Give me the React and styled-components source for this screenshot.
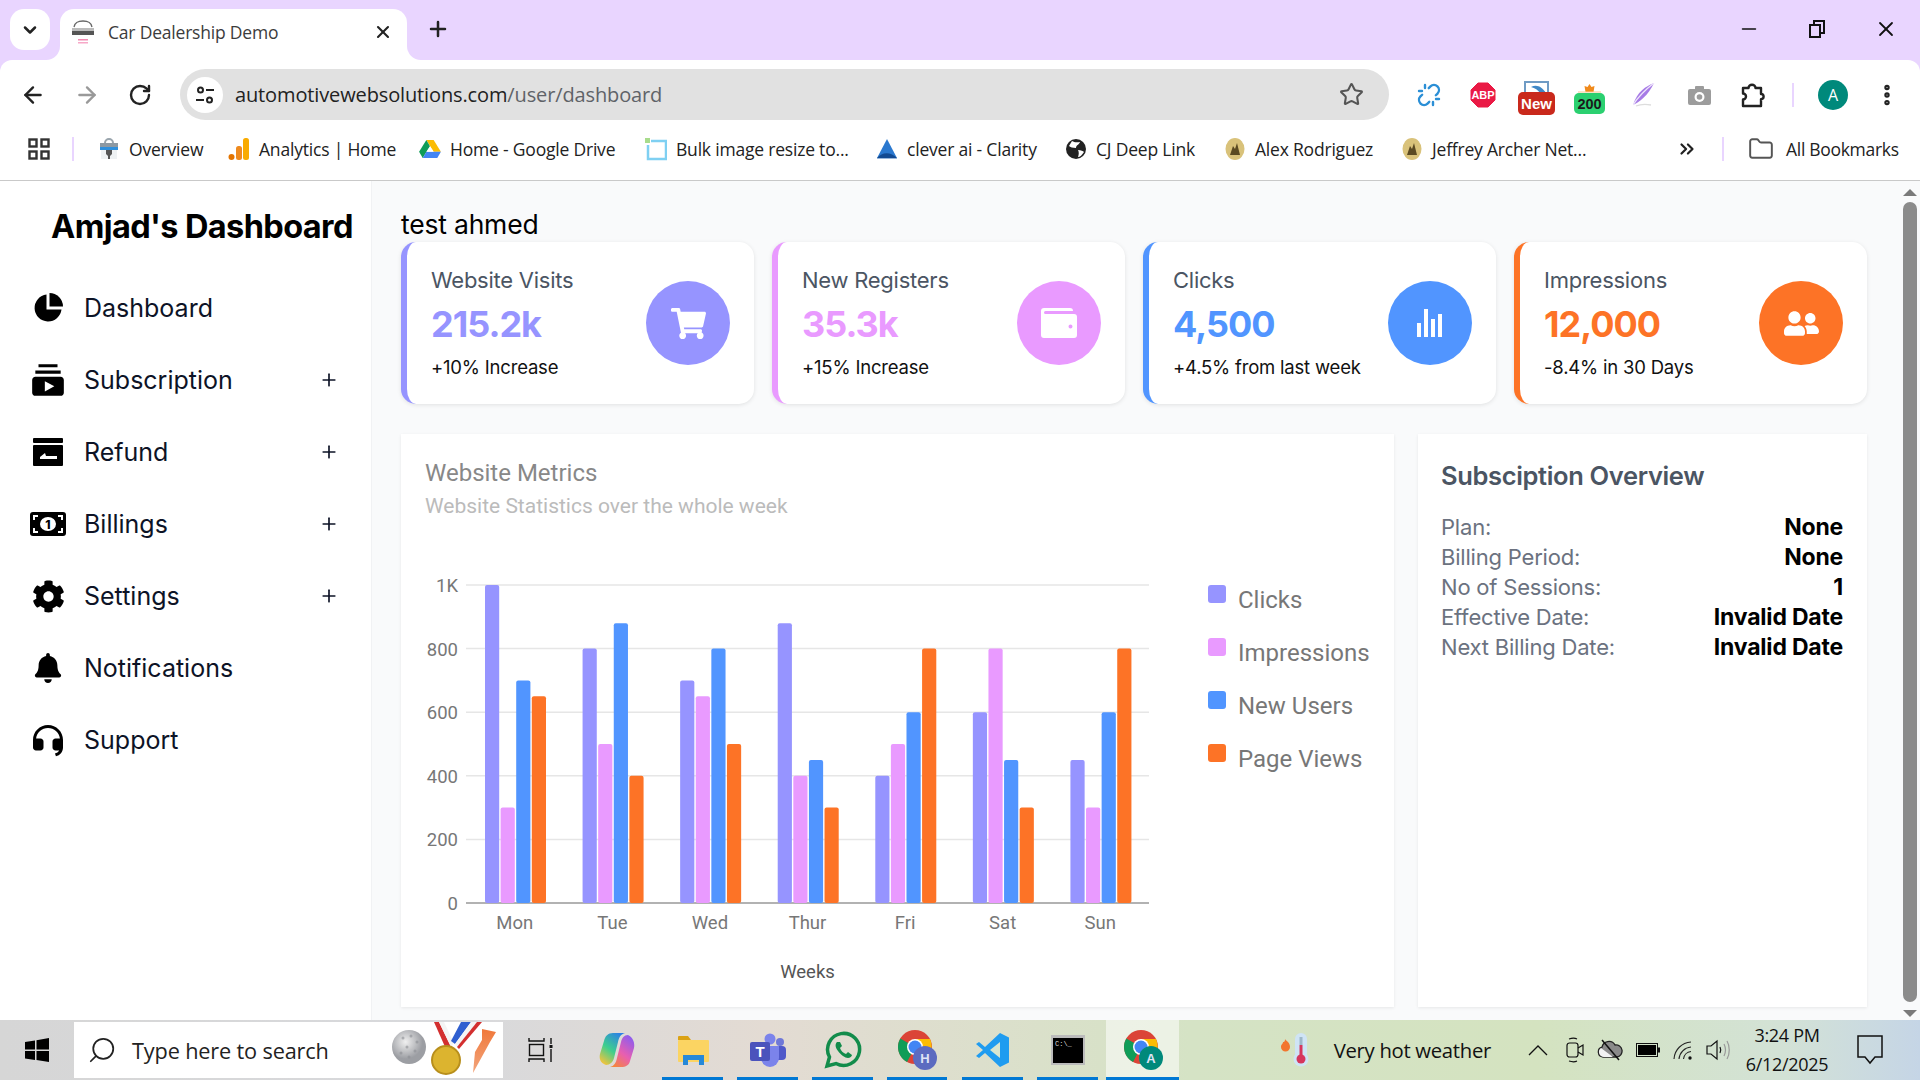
import React from "react";
import styled, { createGlobalStyle } from "styled-components";
import { FaBell, FaCog, FaShoppingCart, FaUserFriends } from "react-icons/fa";
import { MdSubscriptions } from "react-icons/md";
import { RiCustomerServiceFill } from "react-icons/ri";
import { ArrowLeft, ArrowRight, RotateCw, Star, X, Plus, ChevronDown, Minus, Search, ChevronsRight, Folder, MoreVertical, Unlink } from "lucide-react";

const SANS = `"Inter", "Noto Sans", sans-serif`;
const UI = `"Open Sans", "Noto Sans", sans-serif`;
const PURPLE = "#9694ff";
const PINK = "#e99aff";
const BLUE = "#5195ff";
const ORANGE = "#fd7326";

const GlobalStyle = createGlobalStyle`
  html, body { margin: 0; padding: 0; height: 100%; overflow: hidden; }
  #root { height: 100%; }
  * { box-sizing: border-box; }
`;

const Page = styled.div`
  height: 1080px;
  display: flex;
  flex-direction: column;
  background: #e9d5ff;
  font-family: ${UI};
`;

const TabStrip = styled.div`
  height: 60px;
  flex: none;
  display: flex;
  align-items: flex-start;
  padding: 9px 0 0 10px;
`;

const TabSearch = styled.div`
  width: 40px;
  height: 41px;
  border-radius: 14px;
  background: #fff;
  display: flex;
  align-items: center;
  justify-content: center;
  margin-right: 10px;
`;

const Tab = styled.div`
  position: relative;
  width: 347px;
  height: 51px;
  background: #fff;
  border-radius: 14px 14px 0 0;
  display: flex;
  align-items: center;
  padding: 0 14px 6px 11px;
  color: #3c3c3c;
  font-size: 17.5px;
  &::before, &::after {
    content: "";
    position: absolute;
    bottom: 0;
    width: 14px;
    height: 14px;
    background: transparent;
  }
  &::before {
    left: -14px;
    border-bottom-right-radius: 14px;
    box-shadow: 7px 7px 0 7px #fff;
  }
  &::after {
    right: -14px;
    border-bottom-left-radius: 14px;
    box-shadow: -7px 7px 0 7px #fff;
  }
`;

const TabTitle = styled.span`
  flex: 1;
  margin-left: 13px;
  letter-spacing: -0.2px;
`;

const NewTab = styled.div`
  margin: 8px 0 0 19px;
  height: 26px;
  display: flex;
`;

const WindowControls = styled.div`
  margin-left: auto;
  display: flex;
  align-items: center;
  gap: 49px;
  padding: 8px 22px 0 0;
  color: #111;
`;

const Toolbar = styled.div`
  position: relative;
  height: 69px;
  flex: none;
  background: #fff;
  border-radius: 12px 12px 0 0;
  display: flex;
  align-items: flex-start;
  padding: 9px 0 0 20px;
`;

const NavButtons = styled.div`
  width: 160px;
  height: 51px;
  display: flex;
  align-items: center;
  gap: 28px;
  color: #222;
`;

const Address = styled.div`
  width: 1209px;
  height: 51px;
  border-radius: 26px;
  background: #e1e1e1;
  display: flex;
  align-items: center;
  padding: 0 25px 0 7px;
  font-size: 20px;
  color: #222;
`;

const SiteInfo = styled.div`
  width: 36px;
  height: 36px;
  border-radius: 50%;
  background: #fff;
  display: flex;
  align-items: center;
  justify-content: center;
  margin-right: 12px;
`;

const Url = styled.span`
  flex: 1;
  letter-spacing: -0.13px;
  & em { font-style: normal; color: #5f6368; }
`;

const Extensions = styled.div`
  flex: 1;
  height: 51px;
  display: flex;
  align-items: center;
  padding-left: 13px;
`;

const ExtSlot = styled.div`
  width: ${(p) => p.$w}px;
  flex: none;
  display: flex;
  align-items: center;
  justify-content: center;
  padding-top: ${(p) => p.$down || 0}px;
`;

const VSep = styled.div`
  width: 2px;
  height: 24px;
  background: #e9d5ff;
  flex: none;
  margin: 0 ${(p) => p.$right || 0}px 0 ${(p) => p.$left || 0}px;
`;

const Avatar = styled.div`
  width: 30px;
  height: 30px;
  border-radius: 50%;
  background: #00897b;
  color: #fff;
  font-size: 16px;
  display: flex;
  align-items: center;
  justify-content: center;
`;

const Bookmarks = styled.div`
  height: 52px;
  flex: none;
  background: #fff;
  border-bottom: 1px solid #c9c9c9;
  display: flex;
  align-items: center;
  padding: 0 0 11px 28px;
  font-size: 17.5px;
  color: #222;
`;

const AppsGrid = styled.svg`
  margin-right: 22px;
  flex: none;
`;

const Bookmark = styled.div`
  width: ${(p) => p.$w}px;
  flex: none;
  display: flex;
  align-items: center;
  gap: 9px;
  white-space: nowrap;
  letter-spacing: -0.2px;
`;

const FavSlot = styled.span`
  width: 22px;
  flex: none;
  display: flex;
  justify-content: center;
`;

const AllBookmarks = styled.span`
  margin-left: 12px;
  letter-spacing: -0.3px;
`;

const Content = styled.div`
  flex: 1;
  min-height: 0;
  display: flex;
  background: #f9fafb;
`;

const Sidebar = styled.aside`
  width: 372px;
  flex: none;
  background: #fff;
  border-right: 1px solid #f1f2f4;
  padding-top: 24px;
`;

const Brand = styled.h1`
  margin: 0 0 23px 51px;
  font: 700 32.5px/44px ${SANS};
  color: #000;
  letter-spacing: -0.6px;
  white-space: nowrap;
`;

const NavRow = styled.div`
  height: 72px;
  display: flex;
  align-items: center;
  padding: 0 32px 0 28px;
  color: #0d1326;
  font: 400 25px ${SANS};
  letter-spacing: 0;
`;

const NavIcon = styled.span`
  width: 40px;
  height: 36px;
  display: flex;
  align-items: center;
  justify-content: center;
  margin-right: 16px;
  color: #000;
  font-size: 32px;
`;

const NavLabel = styled.span`
  flex: 1;
`;

const Main = styled.main`
  flex: 1;
  min-width: 0;
  padding: 25px 33px 0 29px;
  display: flex;
  flex-direction: column;
`;

const Greeting = styled.div`
  font: 400 26.5px/36px ${SANS};
  color: #000;
  height: 36px;
  letter-spacing: -0.2px;
`;

const StatGrid = styled.div`
  display: grid;
  grid-template-columns: repeat(4, 1fr);
  gap: 18px;
`;

const StatCard = styled.div`
  height: 162px;
  background: #fff;
  border-radius: 15px;
  border-left: 6px solid ${(p) => p.$color};
  box-shadow: 0 1px 4px rgba(0, 0, 0, 0.1);
  display: flex;
  align-items: center;
  justify-content: space-between;
  padding: 0 24px 0 24px;
`;

const StatText = styled.div`
  display: flex;
  flex-direction: column;
`;

const StatTitle = styled.div`
  font: 400 22px/30px ${SANS};
  color: #4b5563;
  letter-spacing: -0.25px;
`;

const StatValue = styled.div`
  font: 700 36px/50px ${SANS};
  color: ${(p) => p.$color};
  letter-spacing: -1px;
  margin-top: 4px;
`;

const StatNote = styled.div`
  font: 400 18.5px/28px ${SANS};
  color: #111;
  margin-top: 3.5px;
  letter-spacing: -0.2px;
  white-space: nowrap;
`;

const StatCircle = styled.div`
  width: 84px;
  height: 84px;
  flex: none;
  border-radius: 50%;
  background: ${(p) => p.$color};
  color: #fff;
  font-size: 35px;
  display: flex;
  align-items: center;
  justify-content: center;
`;

const PanelRow = styled.div`
  flex: 1;
  min-height: 0;
  display: flex;
  gap: 24px;
  margin: 30px 0 13px;
`;

const Panel = styled.section`
  background: #fff;
  box-shadow: 0 1px 3px rgba(0, 0, 0, 0.08);
`;

const MetricsPanel = styled(Panel)`
  width: 993px;
  flex: none;
  padding: 23px 0 0 9px;
`;

const MetricsHead = styled.div`
  padding-left: 15px;
  height: 83px;
`;

const MetricsTitle = styled.div`
  font: 400 24px/32px Roboto, sans-serif;
  color: #888;
`;

const MetricsSub = styled.div`
  font: 400 21px/34px Roboto, sans-serif;
  color: #bbb;
`;

const ChartRow = styled.div`
  display: flex;
  align-items: flex-start;
`;

const ChartSvg = styled.svg`
  flex: none;
`;

const Legend = styled.div`
  margin: 46px 0 0 28px;
  display: flex;
  flex-direction: column;
  gap: 25px;
`;

const LegendItem = styled.div`
  height: 28px;
  display: flex;
  align-items: center;
  font: 400 24px/28px Roboto, sans-serif;
  color: #777;
  gap: 12px;
  &::before {
    content: "";
    width: 18px;
    height: 18px;
    border-radius: 3px;
    margin-top: -12px;
    background: ${(p) => p.$color};
  }
`;

const OverviewPanel = styled(Panel)`
  flex: 1;
  padding: 24px 24px 0 23px;
`;

const OverviewTitle = styled.h2`
  margin: 0 0 18px;
  font: 600 25.5px/36px ${SANS};
  color: #4b5563;
  letter-spacing: -0.35px;
`;

const OverviewRow = styled.div`
  display: flex;
  justify-content: space-between;
  font: 400 22px/30px ${SANS};
  color: #6b7280;
  letter-spacing: -0.2px;
  & b { color: #000; font-weight: 700; font-size: 23px; }
`;

const Scrollbar = styled.div`
  width: 20px;
  flex: none;
  display: flex;
  flex-direction: column;
  align-items: center;
  justify-content: space-between;
  padding: 8px 0 3px;
  background: #f9fafb;
`;

const ScrollThumb = styled.div`
  flex: 1;
  width: 14px;
  margin: 6px 0 8px;
  background: #8b8b8b;
  border-radius: 7px;
`;

const ScrollArrow = styled.div`
  width: 0;
  height: 0;
  border-left: 7px solid transparent;
  border-right: 7px solid transparent;
  ${(p) => (p.$up ? "border-bottom: 7px solid #7a7a7a;" : "border-top: 7px solid #7a7a7a;")}
`;

const Taskbar = styled.div`
  height: 60px;
  flex: none;
  display: flex;
  align-items: stretch;
  background: linear-gradient(90deg, #d6d6d6 0%, #d8d9dc 24%, #e3dbd3 40%, #d5e3c5 62%, #d4e3c0 80%, #d3e2d6 93%, #c5d5e6 100%);
`;

const StartBtn = styled.div`
  width: 74px;
  display: flex;
  align-items: center;
  justify-content: center;
`;

const SearchBox = styled.div`
  width: 429px;
  margin: 2px 0;
  background: #fff;
  display: flex;
  align-items: center;
  padding-left: 13px;
  font-size: 21.7px;
  color: #222;
  gap: 15px;
  overflow: hidden;
`;

const SearchGlass = styled(Search)`
  flex: none;
  transform: scaleX(-1);
`;

const SearchText = styled.span`
  flex: 1;
  letter-spacing: -0.15px;
  white-space: nowrap;
`;

const TaskApps = styled.div`
  display: flex;
  align-items: stretch;
`;

const TaskApp = styled.div`
  width: ${(p) => p.$w}px;
  flex: none;
  margin-right: ${(p) => p.$gap || 0}px;
  display: flex;
  align-items: center;
  justify-content: center;
  background: ${(p) => (p.$active ? "rgba(255,255,255,.55)" : "transparent")};
  border-bottom: 3px solid ${(p) => (p.$open ? "#0078d4" : "transparent")};
  padding-top: 3px;
`;

const Tray = styled.div`
  margin-left: auto;
  display: flex;
  align-items: center;
  color: #111;
`;

const Weather = styled.div`
  display: flex;
  align-items: center;
  gap: 25px;
  font-size: 20.3px;
  margin-right: 37px;
  letter-spacing: -0.3px;
  white-space: nowrap;
`;

const TrayIcons = styled.div`
  display: flex;
  align-items: center;
  gap: 13px;
`;

const TrayChevron = styled.svg`
  margin-right: 5px;
`;

const Clock = styled.div`
  width: 106px;
  margin-left: 4px;
  text-align: center;
  font-size: 18px;
  line-height: 29px;
  letter-spacing: -0.3px;
`;

const NotifyBtn = styled.div`
  width: 80px;
  padding-left: 17px;
  display: flex;
`;

const CATEGORIES = ["Mon", "Tue", "Wed", "Thur", "Fri", "Sat", "Sun"];
const SERIES = [
  { name: "Clicks", color: PURPLE, data: [1000, 800, 700, 880, 400, 600, 450] },
  { name: "Impressions", color: PINK, data: [300, 500, 650, 400, 500, 800, 300] },
  { name: "New Users", color: BLUE, data: [700, 880, 800, 450, 600, 450, 600] },
  { name: "Page Views", color: ORANGE, data: [650, 400, 500, 300, 800, 300, 800] },
];
const CARDS = [
  { title: "Website Visits", value: "215.2k", note: "+10% Increase", color: PURPLE, icon: <FaShoppingCart /> },
  { title: "New Registers", value: "35.3k", note: "+15% Increase", color: PINK, icon: <WalletIcon /> },
  { title: "Clicks", value: "4,500", note: "+4.5% from last week", color: BLUE, icon: <BarsIcon /> },
  { title: "Impressions", value: "12,000", note: "-8.4% in 30 Days", color: ORANGE, icon: <FaUserFriends /> },
];
const OVERVIEW = [
  ["Plan:", "None"],
  ["Billing Period:", "None"],
  ["No of Sessions:", "1"],
  ["Effective Date:", "Invalid Date"],
  ["Next Billing Date:", "Invalid Date"],
];

function WalletIcon() {
  return (
    <svg width="36" height="30" viewBox="0 0 36 30">
      <path fill="#fff" fillRule="evenodd" d="M3 0h26a3 3 0 0 1 3 3H4.500a1 1 0 0 0 0 3H33a3 3 0 0 1 3 3v18a3 3 0 0 1-3 3H3a3 3 0 0 1-3-3V3a3 3 0 0 1 3-3zm26.500 16.500a2 2 0 1 0 0 4 2 2 0 0 0 0-4z" />
    </svg>
  );
}

function BarsIcon() {
  return (
    <svg width="26" height="28" viewBox="0 0 26 28" fill="#fff">
      <rect x="0" y="14" width="4" height="14" />
      <rect x="7" y="0" width="4" height="28" />
      <rect x="14" y="10" width="4" height="18" />
      <rect x="21" y="5" width="4" height="23" />
    </svg>
  );
}

function PieIcon() {
  return (
    <svg width="30" height="30" viewBox="0 0 30 30" fill="#000">
      <path d="M13.500 1.500a13.500 13.500 0 1 0 15 15H13.500z" />
      <path d="M16.500 0A13.500 13.500 0 0 1 30 13.500H16.500z" />
    </svg>
  );
}

function RefundIcon() {
  return (
    <svg width="30" height="28" viewBox="0 0 30 28" fill="#000">
      <rect x="0" y="0" width="30" height="5" rx="1" />
      <path fillRule="evenodd" d="M1 7h28a1 1 0 0 1 1 1v19a1 1 0 0 1-1 1H1a1 1 0 0 1-1-1V8a1 1 0 0 1 1-1zm6 12v2h17v-3H13l-1-3z" />
    </svg>
  );
}

function BillIcon() {
  return (
    <svg width="36" height="24" viewBox="0 0 36 24">
      <rect width="36" height="24" rx="3" fill="#000" />
      <ellipse cx="18" cy="12" rx="8" ry="7" fill="#fff" />
      <path d="M4 8V4h4M32 8V4h-4M4 16v4h4M32 16v4h-4" fill="none" stroke="#fff" strokeWidth="2" />
      <text x="18" y="16.500" textAnchor="middle" fontFamily="Inter, sans-serif" fontWeight="800" fontSize="12" fill="#000">1</text>
    </svg>
  );
}

function TabFavicon() {
  return (
    <svg width="24" height="28" viewBox="0 0 24 28">
      <path d="M3 9c1-5 4-6 9-6s8 1 9 6" fill="none" stroke="#666" strokeWidth="1.300" />
      <path d="M1 10h22v3H1z" fill="#bbb" />
      <rect x="1" y="13" width="22" height="4" fill="#555" />
      <rect x="7" y="21" width="10" height="1.500" fill="#f28ab2" />
      <rect x="7" y="24" width="10" height="1.500" fill="#f7a8c8" />
    </svg>
  );
}

function SiteInfoIcon() {
  return (
    <svg width="20" height="20" viewBox="0 0 20 20" fill="none" stroke="#222" strokeWidth="2">
      <circle cx="5.500" cy="5" r="2.500" />
      <path d="M11 5h8M1 15h8" />
      <circle cx="14.500" cy="15" r="2.500" />
    </svg>
  );
}

function AbpIcon() {
  return (
    <svg width="26" height="26" viewBox="0 0 26 26">
      <path d="M8 1h10l7 7v10l-7 7H8l-7-7V8z" fill="#ea1a45" stroke="#ea1a45" strokeLinejoin="round" />
      <text x="13" y="17" textAnchor="middle" fontFamily="Liberation Sans, sans-serif" fontWeight="700" fontSize="11" fill="#fff">ABP</text>
    </svg>
  );
}

function NewBadgeIcon() {
  return (
    <svg width="37" height="34" viewBox="0 0 37 34">
      <path d="M7 11V1h23v10" fill="#fff" stroke="#6f9bc4" strokeWidth="2" />
      <path d="M13 6c6-3 11 0 15 6h-6c-2-3-5-5-9-6z" fill="#3f87c6" />
      <rect x="0" y="11" width="37" height="23" rx="5" fill="#c9291c" />
      <text x="18.500" y="28" textAnchor="middle" fontFamily="Liberation Sans, sans-serif" fontWeight="700" fontSize="15" fill="#fff">New</text>
    </svg>
  );
}

function CountBadgeIcon() {
  return (
    <svg width="31" height="30" viewBox="0 0 31 30">
      <path d="M15.500 0l2 3 3-1-1 6h-8l-1-6 3 1z" fill="#f08a1c" />
      <path d="M4 8h23" stroke="#f6c68e" strokeWidth="1" />
      <rect x="0" y="9" width="31" height="21" rx="5" fill="#2bd070" />
      <text x="15.500" y="25" textAnchor="middle" fontFamily="Liberation Sans, sans-serif" fontWeight="700" fontSize="14.500" fill="#1a1a1a">200</text>
    </svg>
  );
}

function FeatherIcon() {
  return (
    <svg width="22" height="24" viewBox="0 0 22 24">
      <path d="M21 0C13 3 4 9 0 22c6-3 15-9 21-22z" fill="#a77be6" />
      <path d="M0 22C5 14 12 7 21 0" stroke="#efe6fb" strokeWidth="1.300" fill="none" />
      <path d="M3 23c5-2 9-2 15-1" stroke="#ddd" strokeWidth="1.300" fill="none" />
    </svg>
  );
}

function CameraIcon() {
  return (
    <svg width="23" height="20" viewBox="0 0 23 20">
      <path d="M7 2a1 1 0 0 1 1-1h7a1 1 0 0 1 1 1v2h5a2 2 0 0 1 2 2v12a2 2 0 0 1-2 2H2a2 2 0 0 1-2-2V6a2 2 0 0 1 2-2h5z" fill="#9c9c9c" />
      <circle cx="11.500" cy="12" r="5" fill="#fff" />
      <circle cx="11.500" cy="12" r="2.800" fill="#9c9c9c" />
    </svg>
  );
}

function PuzzleIcon() {
  return (
    <svg width="27" height="26" viewBox="0 0 27 26" fill="none" stroke="#222" strokeWidth="2.400" strokeLinejoin="round">
      <path d="M3 6h5.500a3.500 3.200 0 0 1 7 0H21v6a2.600 2.600 0 0 1 0 5.200V24H3v-6.500a3 3 0 0 0 0-6z" />
    </svg>
  );
}

const Fav = {
  overview: (
    <svg width="22" height="24" viewBox="0 0 22 24">
      <path d="M7 6a4 4 0 0 1 8 0" fill="none" stroke="#9aa5ad" strokeWidth="2" />
      <rect x="2" y="6" width="18" height="4" fill="#8d99a3" />
      <rect x="2" y="10" width="18" height="3" fill="#2f8fdc" />
      <rect x="3" y="13" width="16" height="9" fill="#eef1f3" />
      <path d="M8 13h6v4l-2 2v3h-2v-3l-2-2z" fill="#555" />
    </svg>
  ),
  analytics: (
    <svg width="22" height="24" viewBox="0 0 22 24">
      <rect x="15" y="1" width="6" height="22" rx="2.500" fill="#f9ab00" />
      <rect x="8" y="9" width="6" height="14" rx="2.500" fill="#ee8a1e" />
      <circle cx="3.500" cy="20" r="3" fill="#e37400" />
    </svg>
  ),
  drive: (
    <svg width="22" height="20" viewBox="0 0 24 22">
      <path d="M8 1h8l8 13h-8z" fill="#fbbc04" />
      <path d="M8 1l4 7-8 13-4-7z" fill="#0f9d58" />
      <path d="M8 14h16l-4 7H4z" fill="#4285f4" />
      <path d="M12 8l4 6H8z" fill="#fff" opacity="0.9" />
    </svg>
  ),
  bulk: (
    <svg width="22" height="24" viewBox="0 0 22 24" fill="none">
      <path d="M6 4h15v18H3V8" stroke="#7fd0f2" strokeWidth="2.500" />
      <rect x="0" y="1" width="5" height="5" fill="#a8dc8c" />
    </svg>
  ),
  clever: (
    <svg width="22" height="24" viewBox="0 0 24 24">
      <path d="M12 1l11 21H1z" fill="#2a78cf" />
      <path d="M1 22c6-7 15-7 22 0z" fill="#124a92" />
    </svg>
  ),
  cj: (
    <svg width="22" height="22" viewBox="0 0 22 22">
      <circle cx="11" cy="11" r="10" fill="#222" />
      <path d="M7 3c3 2 6 1 8 1-1 3-4 3-4 6-3 0-6-1-7-2zM13 12c3 0 5 1 6 2-2 3-4 5-6 5 1-3 1-5 0-7z" fill="#fff" />
    </svg>
  ),
  gold: (
    <svg width="20" height="24" viewBox="0 0 20 24">
      <ellipse cx="10" cy="12" rx="9.500" ry="11" fill="#d9c27a" />
      <path d="M5 18l3-9 2 3 2-6 3 12z" fill="#5b4a22" />
    </svg>
  ),
};

const BOOKMARKS = [
  { label: "Overview", icon: Fav.overview, w: 130 },
  { label: "Analytics | Home", icon: Fav.analytics, w: 191 },
  { label: "Home - Google Drive", icon: Fav.drive, w: 226 },
  { label: "Bulk image resize to...", icon: Fav.bulk, w: 231 },
  { label: "clever ai - Clarity", icon: Fav.clever, w: 189 },
  { label: "CJ Deep Link", icon: Fav.cj, w: 159 },
  { label: "Alex Rodriguez", icon: Fav.gold, w: 177 },
  { label: "Jeffrey Archer Net...", icon: Fav.gold, w: 275 },
];

function WindowsLogo() {
  return (
    <svg width="24" height="24" viewBox="0 0 24 24" fill="#000">
      <path d="M0 4l10-1.500V11.500H0zM11.500 2.200L24 0v11.500H11.500zM0 13h10v9L0 20.500zM11.500 13H24v11l-12.500-2z" />
    </svg>
  );
}

function SearchPictures() {
  return (
    <svg width="114" height="56" viewBox="0 0 114 56">
      <defs>
        <radialGradient id="ball" cx="0.4" cy="0.35">
          <stop offset="0" stopColor="#f0f0f0" />
          <stop offset="1" stopColor="#9c9ea3" />
        </radialGradient>
        <linearGradient id="tee" x1="0" y1="0" x2="0" y2="1">
          <stop offset="0" stopColor="#f0783a" />
          <stop offset="1" stopColor="#f2a57c" />
        </linearGradient>
      </defs>
      <circle cx="20" cy="25" r="17" fill="url(#ball)" />
      <g fill="#8d8f94" opacity="0.6">
        <circle cx="14" cy="16" r="1.500" /><circle cx="22" cy="14" r="1.500" /><circle cx="28" cy="20" r="1.500" />
        <circle cx="18" cy="25" r="1.500" /><circle cx="26" cy="29" r="1.500" /><circle cx="12" cy="31" r="1.500" />
        <circle cx="20" cy="35" r="1.500" />
      </g>
      <path d="M45 0h5l12 25-5 2z" fill="#d32f2f" />
      <path d="M50 0h5l10 21-3 4z" fill="#f4f4f4" />
      <path d="M72 0h10L66 22l-4-3z" fill="#2f5fd0" />
      <path d="M82 0h9L69 26l-3-4z" fill="#f4f4f4" />
      <path d="M88 0h5L70 27l-2-2z" fill="#d32f2f" />
      <circle cx="57" cy="38" r="14" fill="#dcb42f" stroke="#b88f1c" strokeWidth="2" />
      <path d="M93 7l14 3-6 10-17 31 2-21 7-12z" fill="url(#tee)" />
    </svg>
  );
}

function TaskViewIcon() {
  return (
    <svg width="26" height="26" viewBox="0 0 26 26" fill="none" stroke="#111" strokeWidth="1.400">
      <path d="M1 1v3h15V1M1 25v-3h15v3" />
      <rect x="1.500" y="7.500" width="14" height="11" />
      <path d="M23 1v6M23 12v13" />
      <rect x="21.500" y="8" width="3" height="3" fill="#111" stroke="none" />
    </svg>
  );
}

function CopilotIcon() {
  return (
    <svg width="36" height="36" viewBox="0 0 36 36">
      <defs>
        <linearGradient id="cop1" x1="0.8" y1="0" x2="0.2" y2="1">
          <stop offset="0" stopColor="#2b7fe8" />
          <stop offset="0.55" stopColor="#3ecf8e" />
          <stop offset="1" stopColor="#f5c33b" />
        </linearGradient>
        <linearGradient id="cop2" x1="0.8" y1="0" x2="0.2" y2="1">
          <stop offset="0" stopColor="#8a5cf0" />
          <stop offset="0.55" stopColor="#e85fb0" />
          <stop offset="1" stopColor="#f5873b" />
        </linearGradient>
      </defs>
      <path d="M14 1h12c-4 1-6 4-7 9l-4 16c-1 4-4 7-8 7C1 31 0 26 1 22l4-13C6 4 9 1 14 1z" fill="url(#cop1)" />
      <path d="M22 35H11c4-1 6-4 7-9l4-16c1-4 3-7 7-7 5 2 7 8 6 13l-4 13c-1 4-4 6-9 6z" fill="url(#cop2)" />
    </svg>
  );
}

function ExplorerIcon() {
  return (
    <svg width="32" height="30" viewBox="0 0 32 30">
      <path d="M1 2a1 1 0 0 1 1-1h9l3 4H1z" fill="#dba214" />
      <rect x="1" y="5" width="31" height="22" rx="1" fill="#fbd462" />
      <path d="M6 30V20h21v10h-5v-5H11v5z" fill="#2689d8" />
    </svg>
  );
}

function TeamsIcon() {
  return (
    <svg width="36" height="34" viewBox="0 0 36 34">
      <circle cx="30" cy="9" r="4" fill="#6f78d8" />
      <circle cx="20" cy="6" r="5.500" fill="#7b83eb" />
      <rect x="24" y="13" width="12" height="14" rx="4" fill="#5059c9" />
      <path d="M11 13h18v12a9 9 0 0 1-18 0z" fill="#7b83eb" />
      <rect x="0" y="9" width="20" height="19" rx="2" fill="#4b53bc" />
      <text x="10" y="24" textAnchor="middle" fontFamily="Liberation Sans, sans-serif" fontWeight="700" fontSize="15" fill="#fff">T</text>
    </svg>
  );
}

function WhatsAppIcon() {
  return (
    <svg width="38" height="38" viewBox="0 0 38 38" fill="none">
      <path d="M3 35l2.500-9A16 16 0 1 1 12 32.500z" stroke="#128c4b" strokeWidth="3.500" />
      <path d="M13 11c-2 2-2 5 1 9s7 7 10 7c2 0 4-2 4-3l-4-3-2 2c-3-1-5-3-6-6l2-2-2-4z" fill="#128c4b" />
    </svg>
  );
}

function ChromeIcon({ badge, badgeColor }) {
  return (
    <svg width="40" height="42" viewBox="0 0 40 42">
      <circle cx="18" cy="18" r="17" fill="#db4437" />
      <path d="M3.300 9.500A17 17 0 0 0 10 33l8-15z" fill="#0f9d58" />
      <path d="M18 10h15a17 17 0 0 1-9 23l-6-15z" fill="#fbbc04" />
      <circle cx="18" cy="18" r="8" fill="#fff" />
      <circle cx="18" cy="18" r="6.500" fill="#4285f4" />
      <circle cx="28" cy="29" r="12" fill={badgeColor} />
      <text x="28" y="34" textAnchor="middle" fontFamily="Liberation Sans, sans-serif" fontWeight="700" fontSize="13" fill="#dfe3f5">{badge}</text>
    </svg>
  );
}

function VsCodeIcon() {
  return (
    <svg width="36" height="36" viewBox="0 0 36 36">
      <path d="M25 1l9 4.500v25L25 35 10 21l-6 5-3-2 7-6-7-6 3-2 6 5z" fill="#1f9cf0" />
      <path d="M25 10v16l-10-8z" fill="#d8e6d0" />
    </svg>
  );
}

function TerminalIcon() {
  return (
    <svg width="34" height="30" viewBox="0 0 34 30">
      <rect width="34" height="30" fill="#bbb" />
      <rect x="2" y="3" width="30" height="25" fill="#000" />
      <text x="4" y="11" fontFamily="Liberation Mono, monospace" fontSize="7" fill="#ddd">C:\_</text>
    </svg>
  );
}

function ThermoIcon() {
  return (
    <svg width="28" height="34" viewBox="0 0 28 34">
      <path d="M4 6c1 2 5 3 5 8a4.500 4.500 0 0 1-9 0c0-3 2-3 2-5 1 0 2 0 2-3z" fill="#f2762e" />
      <rect x="14" y="0" width="12" height="26" rx="6" fill="#cfe4f5" />
      <circle cx="20" cy="26" r="7.500" fill="#cfe4f5" />
      <rect x="18.500" y="4" width="3" height="8" fill="#9db7c8" />
      <rect x="18.500" y="12" width="3" height="14" fill="#d6365c" />
      <circle cx="20" cy="26" r="4.500" fill="#d6365c" />
    </svg>
  );
}

function MeetIcon() {
  return (
    <svg width="18" height="26" viewBox="0 0 18 26" fill="none" stroke="#111" strokeWidth="1.200">
      <path d="M3 2c3-1 6-1 8 0M3 24c3 1 6 1 8 0" />
      <rect x="1" y="6" width="11" height="14" rx="2.500" />
      <path d="M12 11l5-3v10l-5-3" />
    </svg>
  );
}

function CloudOffIcon() {
  return (
    <svg width="26" height="22" viewBox="0 0 26 22">
      <path d="M6 18a5 5 0 0 1-1-9.800A7 7 0 0 1 18 6a5.500 5.500 0 0 1 2 12z" fill="#8a8a8a" stroke="#222" strokeWidth="1.300" />
      <path d="M4 9l12 9H7a5 5 0 0 1-3-9z" fill="#f2f2f2" />
      <path d="M5 1l17 20" stroke="#111" strokeWidth="1.500" />
    </svg>
  );
}

function BatteryIcon() {
  return (
    <svg width="24" height="14" viewBox="0 0 24 14">
      <rect x="0.500" y="0.500" width="21" height="13" fill="none" stroke="#111" />
      <rect x="2" y="2" width="18" height="10" fill="#000" />
      <rect x="22" y="4.500" width="2" height="5" fill="#111" />
    </svg>
  );
}

function WifiIcon() {
  return (
    <svg width="20" height="20" viewBox="0 0 20 20" fill="none" stroke="#222" strokeWidth="1.100">
      <path d="M1 19A18 18 0 0 1 18 2M6 19A13 13 0 0 1 18 7M10.500 19A8.500 8.500 0 0 1 18 11.500" />
      <circle cx="17" cy="18" r="1.700" fill="#111" stroke="none" />
    </svg>
  );
}

function VolumeIcon() {
  return (
    <svg width="24" height="22" viewBox="0 0 24 22" fill="none" stroke="#111" strokeWidth="1.200">
      <path d="M1 7h4l6-5v18l-6-5H1z" />
      <path d="M14 8c1 2 1 4 0 6" />
      <path d="M18 5c2 4 2 8 0 12M21 2c3 5 3 13 0 18" stroke="#999" />
    </svg>
  );
}

function NotifyIcon() {
  return (
    <svg width="26" height="30" viewBox="0 0 26 30" fill="none" stroke="#111" strokeWidth="1.500">
      <path d="M1 1h24v21h-7l-5 6-5-6H1z" />
    </svg>
  );
}

function MetricsChart() {
  const left = 466;
  const right = 1149;
  const zero = 903;
  const top = 585;
  const unit = (zero - top) / 1000;
  const slot = (right - left) / 7;
  const barW = 14.2;
  const step = 15.6;
  const ticks = [
    [1000, "1K"],
    [800, "800"],
    [600, "600"],
    [400, "400"],
    [200, "200"],
    [0, "0"],
  ];
  return (
    <ChartSvg width="770" height="460" viewBox="410 540 770 460">
      {ticks.map(([v, label]) => (
        <g key={v}>
          <line x1={left} x2={right} y1={zero - v * unit} y2={zero - v * unit} stroke={v === 0 ? "#999" : "#e6e6e6"} strokeWidth="1.500" />
          <text x={458} y={zero - v * unit + 7} textAnchor="end" fontFamily="Roboto, sans-serif" fontSize="18.500" fill="#777">{label}</text>
        </g>
      ))}
      {CATEGORIES.map((c, i) => {
        const x0 = left + slot * i + 19;
        return (
          <g key={c}>
            {SERIES.map((s, j) => (
              <rect key={s.name} x={x0 + j * step} y={zero - s.data[i] * unit} width={barW} height={s.data[i] * unit} rx="2" fill={s.color} />
            ))}
            <text x={left + slot * i + slot / 2} y={929} textAnchor="middle" fontFamily="Roboto, sans-serif" fontSize="18.500" fill="#777">{c}</text>
          </g>
        );
      })}
      <text x={807.5} y={978} textAnchor="middle" fontFamily="Roboto, sans-serif" fontSize="18.500" fill="#555">Weeks</text>
    </ChartSvg>
  );
}

export default function App() {
  return (
    <Page>
      <GlobalStyle />
      <TabStrip>
        <TabSearch><ChevronDown size={20} strokeWidth={3} color="#222" /></TabSearch>
        <Tab>
          <TabFavicon />
          <TabTitle>Car Dealership Demo</TabTitle>
          <X size={20} strokeWidth={2.5} color="#222" />
        </Tab>
        <NewTab><Plus size={24} strokeWidth={2.5} color="#222" /></NewTab>
        <WindowControls>
          <Minus size={22} strokeWidth={1.8} />
          <svg width="16" height="18" viewBox="0 0 16 18" fill="none" stroke="#111" strokeWidth="2">
            <rect x="1" y="5" width="10" height="12" />
            <path d="M5 5V1h10v12h-4" />
          </svg>
          <X size={24} strokeWidth={1.8} />
        </WindowControls>
      </TabStrip>

      <Toolbar>
        <NavButtons>
          <ArrowLeft size={26} strokeWidth={2.2} />
          <ArrowRight size={26} strokeWidth={2.2} color="#999" />
          <RotateCw size={24} strokeWidth={2.4} />
        </NavButtons>
        <Address>
          <SiteInfo><SiteInfoIcon /></SiteInfo>
          <Url>automotivewebsolutions.com<em>/user/dashboard</em></Url>
          <Star size={25} strokeWidth={2} color="#555" />
        </Address>
        <Extensions>
          <ExtSlot $w={54}><Unlink size={24} color="#2b8fd6" strokeWidth={2.4} /></ExtSlot>
          <ExtSlot $w={54}><AbpIcon /></ExtSlot>
          <ExtSlot $w={52} $down={6}><NewBadgeIcon /></ExtSlot>
          <ExtSlot $w={55} $down={8}><CountBadgeIcon /></ExtSlot>
          <ExtSlot $w={54}><FeatherIcon /></ExtSlot>
          <ExtSlot $w={56}><CameraIcon /></ExtSlot>
          <ExtSlot $w={52}><PuzzleIcon /></ExtSlot>
          <ExtSlot $w={27}><VSep /></ExtSlot>
          <ExtSlot $w={54}><Avatar>A</Avatar></ExtSlot>
          <ExtSlot $w={54}><MoreVertical size={26} strokeWidth={3} color="#222" /></ExtSlot>
        </Extensions>
      </Toolbar>

      <Bookmarks>
        <AppsGrid width="22" height="22" viewBox="0 0 22 22" fill="none" stroke="#333" strokeWidth="2.400">
          <rect x="1.500" y="1.500" width="7" height="7" />
          <rect x="13.500" y="1.500" width="7" height="7" />
          <rect x="1.500" y="13.500" width="7" height="7" />
          <rect x="13.500" y="13.500" width="7" height="7" />
        </AppsGrid>
        <VSep $right={24} />
        {BOOKMARKS.map((b) => (
          <Bookmark key={b.label} $w={b.w}><FavSlot>{b.icon}</FavSlot><span>{b.label}</span></Bookmark>
        ))}
        <ChevronsRight size={22} strokeWidth={2.4} color="#222" />
        <VSep $left={24} $right={24} />
        <Folder size={26} strokeWidth={1.8} color="#555" />
        <AllBookmarks>All Bookmarks</AllBookmarks>
      </Bookmarks>

      <Content>
        <Sidebar>
          <Brand>Amjad's Dashboard</Brand>
          <NavRow><NavIcon><PieIcon /></NavIcon><NavLabel>Dashboard</NavLabel></NavRow>
          <NavRow><NavIcon><MdSubscriptions size={38} /></NavIcon><NavLabel>Subscription</NavLabel><Plus size={20} strokeWidth={2} /></NavRow>
          <NavRow><NavIcon><RefundIcon /></NavIcon><NavLabel>Refund</NavLabel><Plus size={20} strokeWidth={2} /></NavRow>
          <NavRow><NavIcon><BillIcon /></NavIcon><NavLabel>Billings</NavLabel><Plus size={20} strokeWidth={2} /></NavRow>
          <NavRow><NavIcon><FaCog size={33} /></NavIcon><NavLabel>Settings</NavLabel><Plus size={20} strokeWidth={2} /></NavRow>
          <NavRow><NavIcon><FaBell size={30} /></NavIcon><NavLabel>Notifications</NavLabel></NavRow>
          <NavRow><NavIcon><RiCustomerServiceFill size={36} /></NavIcon><NavLabel>Support</NavLabel></NavRow>
        </Sidebar>

        <Main>
          <Greeting>test ahmed</Greeting>
          <StatGrid>
            {CARDS.map((c) => (
              <StatCard key={c.title} $color={c.color}>
                <StatText>
                  <StatTitle>{c.title}</StatTitle>
                  <StatValue $color={c.color}>{c.value}</StatValue>
                  <StatNote>{c.note}</StatNote>
                </StatText>
                <StatCircle $color={c.color}>{c.icon}</StatCircle>
              </StatCard>
            ))}
          </StatGrid>
          <PanelRow>
            <MetricsPanel>
              <MetricsHead>
                <MetricsTitle>Website Metrics</MetricsTitle>
                <MetricsSub>Website Statistics over the whole week</MetricsSub>
              </MetricsHead>
              <ChartRow>
                <MetricsChart />
                <Legend>
                  {SERIES.map((s) => (
                    <LegendItem key={s.name} $color={s.color}>{s.name}</LegendItem>
                  ))}
                </Legend>
              </ChartRow>
            </MetricsPanel>
            <OverviewPanel>
              <OverviewTitle>Subsciption Overview</OverviewTitle>
              {OVERVIEW.map(([k, v]) => (
                <OverviewRow key={k}><span>{k}</span><b>{v}</b></OverviewRow>
              ))}
            </OverviewPanel>
          </PanelRow>
        </Main>

        <Scrollbar>
          <ScrollArrow $up />
          <ScrollThumb />
          <ScrollArrow />
        </Scrollbar>
      </Content>

      <Taskbar>
        <StartBtn><WindowsLogo /></StartBtn>
        <SearchBox>
          <SearchGlass size={30} strokeWidth={1.4} />
          <SearchText>Type here to search</SearchText>
          <SearchPictures />
        </SearchBox>
        <TaskApps>
          <TaskApp $w={75}><TaskViewIcon /></TaskApp>
          <TaskApp $w={78} $gap={6}><CopilotIcon /></TaskApp>
          <TaskApp $open $w={61} $gap={14}><ExplorerIcon /></TaskApp>
          <TaskApp $open $w={61} $gap={14}><TeamsIcon /></TaskApp>
          <TaskApp $open $w={61} $gap={14}><WhatsAppIcon /></TaskApp>
          <TaskApp $open $w={60} $gap={15}><ChromeIcon badge="H" badgeColor="#5c6bc0" /></TaskApp>
          <TaskApp $open $w={61} $gap={14}><VsCodeIcon /></TaskApp>
          <TaskApp $open $w={61} $gap={8}><TerminalIcon /></TaskApp>
          <TaskApp $open $active $w={73}><ChromeIcon badge="A" badgeColor="#00897b" /></TaskApp>
        </TaskApps>
        <Tray>
          <Weather><ThermoIcon /><span>Very hot weather</span></Weather>
          <TrayIcons>
            <TrayChevron width="20" height="12" viewBox="0 0 20 12" fill="none" stroke="#111" strokeWidth="1.300">
              <path d="M1 11l9-9 9 9" />
            </TrayChevron>
            <MeetIcon />
            <CloudOffIcon />
            <BatteryIcon />
            <WifiIcon />
            <VolumeIcon />
          </TrayIcons>
          <Clock>3:24 PM<br />6/12/2025</Clock>
          <NotifyBtn><NotifyIcon /></NotifyBtn>
        </Tray>
      </Taskbar>
    </Page>
  );
}
